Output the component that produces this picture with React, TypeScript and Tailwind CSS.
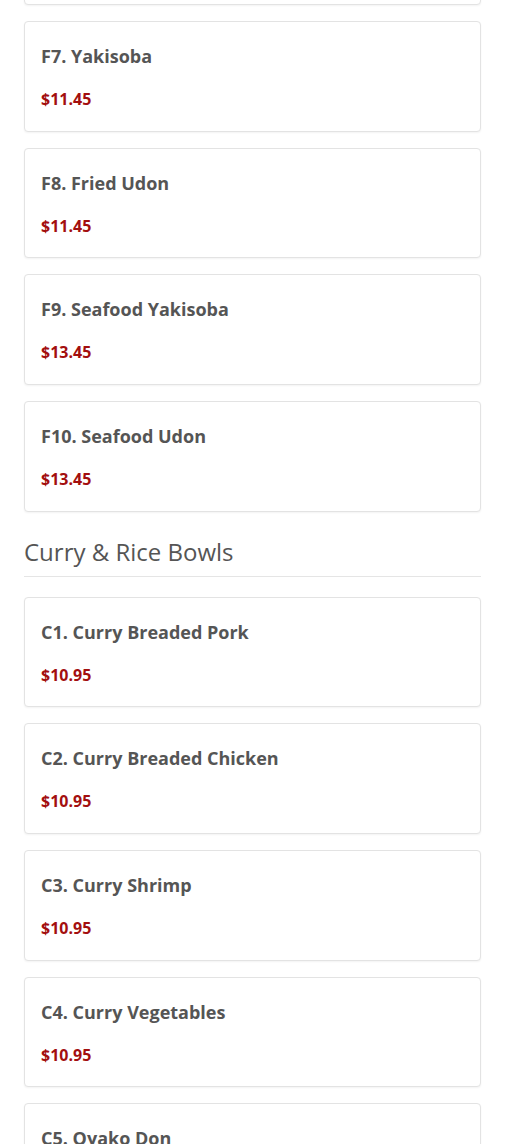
import React from "react";

const font = { fontFamily: '"Open Sans", "Liberation Sans", sans-serif' };

function Card({ name, price }: { name: string; price: string }) {
  return (
    <div className="rounded-[4px] border border-[#e3e3e3] bg-white px-4 pt-[24px] pb-[20.67px] shadow-[0_1px_2px_rgba(0,0,0,0.05)]">
      <div className="text-[18px] leading-[20px] font-bold text-[#555555]">{name}</div>
      <div className="mt-[22px] text-[16px] leading-[22px] font-bold text-[#a30f0f]">{price}</div>
    </div>
  );
}

export default function App() {
  const fried = [
    ["F7. Yakisoba", "$11.45"],
    ["F8. Fried Udon", "$11.45"],
    ["F9. Seafood Yakisoba", "$13.45"],
    ["F10. Seafood Udon", "$13.45"],
  ];
  const curry = [
    ["C1. Curry Breaded Pork", "$10.95"],
    ["C2. Curry Breaded Chicken", "$10.95"],
    ["C3. Curry Shrimp", "$10.95"],
    ["C4. Curry Vegetables", "$10.95"],
    ["C5. Oyako Don", "$10.95"],
  ];
  return (
    <div className="h-[1144px] overflow-hidden bg-white" style={font}>
      <div className="mt-[-105.67px] px-6 w-[505px]">
        <div className="flex flex-col gap-4">
          <div className="h-[110.67px] rounded-[4px] border border-[#e3e3e3] bg-white shadow-[0_1px_2px_rgba(0,0,0,0.05)]" />
          {fried.map(([n, p]) => (
            <Card key={n} name={n} price={p} />
          ))}
        </div>
        <div className="mt-[27px] border-b border-[#e5e5e5] pb-[11px]">
          <h2 className="text-[24px] leading-[26px] font-normal text-[#555555]">Curry &amp; Rice Bowls</h2>
        </div>
        <div className="mt-[20px] flex flex-col gap-4">
          {curry.map(([n, p]) => (
            <Card key={n} name={n} price={p} />
          ))}
        </div>
      </div>
    </div>
  );
}
